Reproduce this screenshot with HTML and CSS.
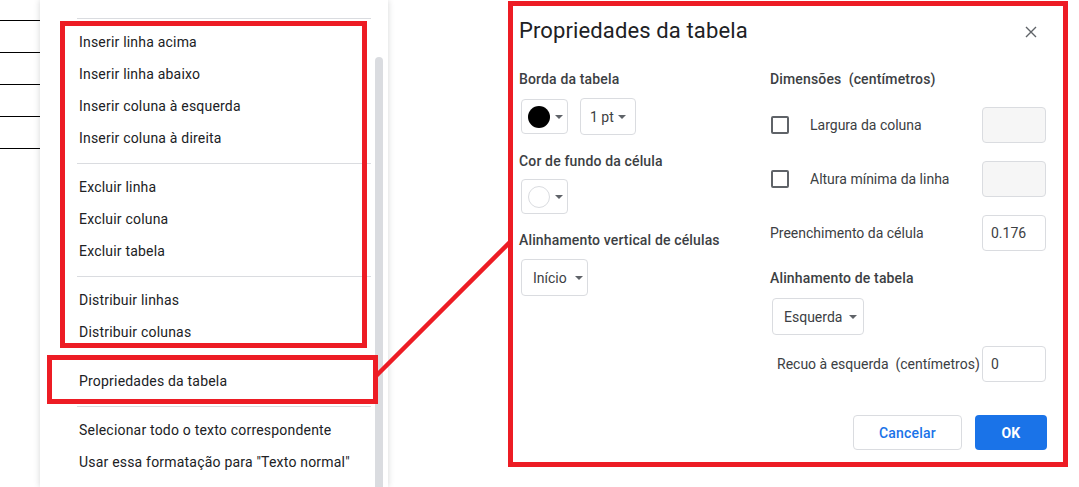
FILE: index.html
```html
<!DOCTYPE html>
<html lang="pt">
<head>
<meta charset="utf-8">
<title>Propriedades da tabela</title>
<link rel="stylesheet" href="styles.css">
</head>
<body>
<div class="page">
  <div class="doc">
    <div class="rule"></div>
    <div class="rule"></div>
    <div class="rule"></div>
    <div class="rule"></div>
    <div class="rule"></div>
  </div>

  <div class="menu">
    <div class="menu-list">
      <div class="sep sep-top"></div>
      <div class="item">Inserir linha acima</div>
      <div class="item">Inserir linha abaixo</div>
      <div class="item">Inserir coluna à esquerda</div>
      <div class="item">Inserir coluna à direita</div>
      <div class="sep"></div>
      <div class="item">Excluir linha</div>
      <div class="item">Excluir coluna</div>
      <div class="item">Excluir tabela</div>
      <div class="sep"></div>
      <div class="item">Distribuir linhas</div>
      <div class="item">Distribuir colunas</div>
      <div class="sep"></div>
      <div class="item">Propriedades da tabela</div>
      <div class="sep"></div>
      <div class="item">Selecionar todo o texto correspondente</div>
      <div class="item">Usar essa formatação para "Texto normal"</div>
    </div>
    <div class="track"><div class="thumb"></div></div>
  </div>

  <div class="dialog annotated">
    <div class="dlg-head">
      <div class="dlg-title">Propriedades da tabela</div>
      <div class="close">
        <svg width="12" height="12" viewBox="0 0 12 12"><path d="M1 1 L11 11 M11 1 L1 11" stroke="#5f6368" stroke-width="1.4" fill="none"/></svg>
      </div>
    </div>
    <div class="dlg-body">
      <div class="col-left">
        <div class="sec-label">Borda da tabela</div>
        <div class="ctrl-row">
          <div class="dd dd-color"><span class="swatch swatch-black"></span><span class="caret"></span></div>
          <div class="dd dd-pt"><span>1 pt</span><span class="caret"></span></div>
        </div>
        <div class="sec-label gap-top">Cor de fundo da célula</div>
        <div class="ctrl-row ctrl-row-tight">
          <div class="dd dd-color"><span class="swatch swatch-white"></span><span class="caret"></span></div>
        </div>
        <div class="sec-label gap-top">Alinhamento vertical de células</div>
        <div class="ctrl-row">
          <div class="dd dd-inicio"><span>Início</span><span class="caret"></span></div>
        </div>
      </div>
      <div class="col-right">
        <div class="sec-label">Dimensões&nbsp; (centímetros)</div>
        <div class="field-row first-row">
          <div class="checkbox"></div>
          <div class="field-label with-check">Largura da coluna</div>
          <input class="num num-disabled" type="text" value="" disabled>
        </div>
        <div class="field-row">
          <div class="checkbox"></div>
          <div class="field-label with-check">Altura mínima da linha</div>
          <input class="num num-disabled" type="text" value="" disabled>
        </div>
        <div class="field-row">
          <div class="field-label">Preenchimento da célula</div>
          <input class="num" type="text" value="0.176">
        </div>
        <div class="sec-label sec-align">Alinhamento de tabela</div>
        <div class="ctrl-row">
          <div class="dd dd-esq"><span>Esquerda</span><span class="caret"></span></div>
        </div>
        <div class="field-row recuo-row">
          <div class="field-label indent">Recuo à esquerda&nbsp; (centímetros)</div>
          <input class="num" type="text" value="0">
        </div>
      </div>
    </div>
    <div class="dlg-foot">
      <div class="btn btn-cancel">Cancelar</div>
      <div class="btn btn-ok">OK</div>
    </div>
  </div>

  <div class="mark mark-a"></div>
  <div class="mark mark-b"></div>
  <svg class="connector" width="1079" height="487" viewBox="0 0 1079 487">
    <line x1="376" y1="376" x2="510" y2="242" stroke="#ed1c24" stroke-width="4.5"/>
  </svg>
</div>
</body>
</html>
```

FILE: styles.css
```css
* { box-sizing: border-box; }

html, body {
  margin: 0;
  padding: 0;
  background: #fff;
}

body {
  width: 1079px;
  height: 487px;
  overflow: hidden;
  font-family: Roboto, "Liberation Sans", Arial, sans-serif;
  font-size: 14px;
  color: #202124;
}

.page {
  position: relative;
  display: flex;
  align-items: flex-start;
  width: 1079px;
  height: 487px;
}

/* document strip with table rules */
.doc {
  width: 40px;
  flex: 0 0 40px;
  padding-top: 20px;
}
.rule {
  height: 32px;
  border-top: 1px solid #000;
}

/* context menu */
.menu {
  width: 348px;
  flex: 0 0 348px;
  height: 487px;
  background: #fff;
  box-shadow: 0 0 6px rgba(60, 64, 67, 0.22);
  display: flex;
}
.menu-list {
  width: 335px;
  padding-top: 18px;
}
.sep {
  height: 1px;
  background: #dadce0;
  margin: 9px 4px 7px 37px;
}
.sep-top { margin-top: 0; }
.item {
  height: 32px;
  line-height: 32px;
  padding-left: 39px;
  font-size: 14px;
  color: #202124;
  white-space: nowrap;
  letter-spacing: 0.2px;
}
.track {
  width: 8px;
  margin-right: 5px;
  padding-top: 57px;
  height: 487px;
  display: flex;
  flex-direction: column;
}
.thumb {
  flex: 1;
  background: #dadce0;
  border-radius: 4px 4px 0 0;
}

/* dialog */
.dialog {
  margin-left: 120px;
  margin-top: 1px;
  width: 560px;
  height: 466px;
  background: #fff;
  padding: 11px 16px 0 6px;
}
.annotated {
  border: 5px solid #ed1c24;
}
.dlg-head {
  display: flex;
  align-items: center;
  justify-content: space-between;
  height: 28px;
}
.dlg-title {
  font-size: 22px;
  line-height: 28px;
  color: #202124;
  font-weight: 400;
  letter-spacing: 0.12px;
}
.close {
  width: 12px;
  height: 12px;
  margin-right: 10px;
  margin-top: 2px;
  display: flex;
}

.dlg-body {
  display: grid;
  grid-template-columns: 251px 1fr;
  margin-top: 24px;
}

.sec-label {
  font-size: 14px;
  line-height: 20px;
  font-weight: 500;
  color: #3c4043;
  white-space: nowrap;
  letter-spacing: 0.15px;
}
.gap-top { margin-top: 16px; }

.ctrl-row {
  display: flex;
  align-items: center;
  gap: 12px;
  margin-top: 9px;
  height: 37px;
}
.ctrl-row-tight { margin-top: 8px; height: 35px; }

.dd {
  display: inline-flex;
  align-items: center;
  border: 1px solid #dadce0;
  border-radius: 4px;
  background: #fff;
  color: #3c4043;
  font-size: 14px;
  height: 37px;
}
.caret {
  width: 0;
  height: 0;
  border-left: 4px solid transparent;
  border-right: 4px solid transparent;
  border-top: 4px solid #5f6368;
}
.dd-color {
  width: 47px;
  height: 35px;
  margin-left: 2px;
  padding-left: 6px;
}
.dd-color .caret { margin-left: 5px; }
.swatch {
  width: 22px;
  height: 22px;
  border-radius: 50%;
}
.swatch-black { background: #000; }
.swatch-white { background: #fff; border: 1px solid #dadce0; }

.dd-pt {
  width: 56px;
  padding-left: 9px;
}
.dd-pt .caret { margin-left: 4px; }

.dd-inicio {
  width: 67px;
  margin-left: 2px;
  padding-left: 11px;
}
.dd-inicio .caret { margin-left: 8px; }

.dd-esq {
  width: 92px;
  margin-left: 2px;
  padding-left: 11px;
}
.dd-esq .caret { margin-left: 7px; }

.field-row {
  display: flex;
  align-items: center;
  height: 36px;
  margin-top: 18px;
}
.field-row.first-row { margin-top: 18px; }
.checkbox {
  width: 18px;
  height: 18px;
  margin-left: 1px;
  border: 2px solid #5f6368;
  border-radius: 2px;
  flex: 0 0 18px;
}
.field-label {
  font-size: 14px;
  color: #3c4043;
  white-space: nowrap;
}
.field-label.with-check { margin-left: 21px; }
.field-label.indent { padding-left: 7px; }

.num {
  margin-left: auto;
  margin-right: 1px;
  width: 64px;
  height: 36px;
  border: 1px solid #dadce0;
  border-radius: 4px;
  padding: 0 0 0 8px;
  font: inherit;
  font-size: 14px;
  color: #3c4043;
  background: #fff;
  outline: none;
}
.num-disabled { background: #f6f6f6; }

.sec-align { margin-top: 17px; }
.col-right .ctrl-row { margin-top: 10px; }
.recuo-row { margin-top: 11px; }

.dlg-foot {
  display: flex;
  justify-content: flex-end;
  gap: 13px;
  margin-top: 33px;
}
.btn {
  height: 35px;
  border-radius: 4px;
  display: flex;
  align-items: center;
  justify-content: center;
  font-size: 14px;
  font-weight: 500;
  letter-spacing: 0.2px;
}
.btn-cancel {
  width: 109px;
  border: 1px solid #dadce0;
  color: #1a73e8;
  background: #fff;
}
.btn-ok {
  width: 72px;
  background: #1a73e8;
  color: #fff;
  font-weight: 700;
}

/* annotations drawn over the screenshot */
.mark {
  position: absolute;
  border: 5px solid #ed1c24;
  pointer-events: none;
}
.mark-a {
  left: 60px;
  top: 21px;
  width: 307px;
  height: 327px;
}
.mark-b {
  left: 47px;
  top: 355px;
  width: 331px;
  height: 49px;
}
.connector {
  position: absolute;
  left: 0;
  top: 0;
  pointer-events: none;
}
```
